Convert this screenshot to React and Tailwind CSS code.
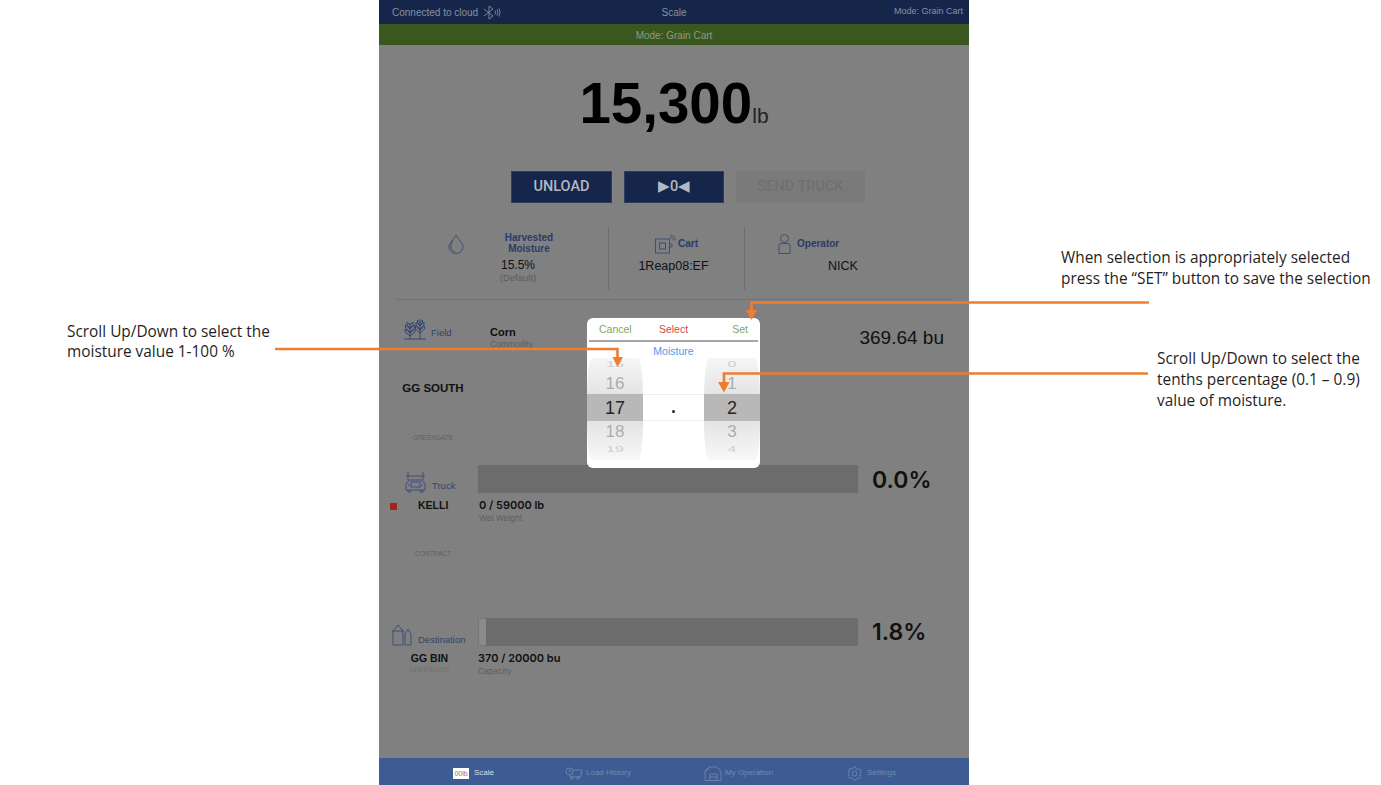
const sans = "font-['Liberation_Sans',Arial,sans-serif]";
const inter = "font-['Inter',sans-serif]";

function BluetoothIcon() {
  return (
    <svg width="18" height="15" viewBox="0 0 18 15" fill="none" stroke="#8f99ab" strokeWidth="0.8">
      <path d="M1 4 L10 11 L6 14 V1 L10 4 L1 11" />
      <path d="M12 5.5 Q13 7.5 12 9.5 M14 4.5 Q15.5 7.5 14 10.5 M16 3.5 Q18 7.5 16 11.5" />
    </svg>
  );
}

function DropIcon() {
  return (
    <svg width="16" height="20" viewBox="0 0 16 20" fill="none" stroke="#3f4f78" strokeWidth="1">
      <path d="M8 1 C6 5 1 9 1 13 A7 6.5 0 0 0 15 13 C15 9 10 5 8 1 Z" />
      <path d="M5 6.5 C3.5 9 2.8 11 3 13 C3.2 15.5 5 17.5 7 18" />
    </svg>
  );
}

function CartIcon() {
  return (
    <svg width="21" height="20" viewBox="0 0 21 20" fill="none" stroke="#3f4f78" strokeWidth="1">
      <rect x="0.5" y="5" width="14" height="14" />
      <rect x="4.5" y="9" width="6" height="6" />
      <path d="M14.5 10 H17 V13 H14.5" />
      <path d="M15 3 Q18 3.5 18.5 6.5 M15 1 Q20 1.5 20.5 6.5" />
    </svg>
  );
}

function OperatorIcon() {
  return (
    <svg width="13" height="20" viewBox="0 0 13 20" fill="none" stroke="#3f4f78" strokeWidth="1">
      <circle cx="6.5" cy="4.5" r="4" />
      <path d="M1 19.5 V11.5 Q1 9.5 3 9.5 H10 Q12 9.5 12 11.5 V19.5 Z" />
    </svg>
  );
}

function FieldIcon() {
  return (
    <svg width="23" height="22" viewBox="0 0 23 22" fill="none" stroke="#34466f" strokeWidth="1">
      <path d="M0 21 H22" />
      <path d="M6 21 V5 M16 21 V1" />
      <path d="M6 18 L1 14 V11 L6 15 L11 11 V14 L6 18 M6 14 L1.5 10 V7 L6 11 L10.5 7 V10 L6 14 M6 10 L3 7 V4 L6 7 L9 4 V7 L6 10" />
      <path d="M16 15 L11.5 11 V8 L16 12 L20.5 8 V11 L16 15 M16 11 L12 7 V4 L16 8 L20 4 V7 L16 11 M16 7 L13.5 4.5 V2 L16 4.5 L18.5 2 V4.5 L16 7" />
    </svg>
  );
}

function TruckIcon() {
  return (
    <svg width="22" height="22" viewBox="0 0 22 22" fill="none" stroke="#3f4f78" strokeWidth="1">
      <path d="M3 1 V9 M18 1 V9 M1 5 H20" />
      <path d="M4 9 H17 L20 13 V19 H1 V13 Z" />
      <rect x="6" y="11" width="9" height="5" />
      <path d="M3 19 V21 H6 V19 M15 19 V21 H18 V19" />
      <path d="M3 14 H5 M16 14 H18" />
    </svg>
  );
}

function SiloIcon() {
  return (
    <svg width="20" height="22" viewBox="0 0 20 22" fill="none" stroke="#3f4f78" strokeWidth="1">
      <path d="M1 21 V7 L6 1 L11 7 V21 Z M0 7 H12" />
      <path d="M13 21 V10 L16 5 L19 10 V21 Z" />
    </svg>
  );
}

function LoadIcon() {
  return (
    <svg width="18" height="13" viewBox="0 0 18 13" fill="none" stroke="#7688ab" strokeWidth="0.8">
      <circle cx="4.5" cy="4.5" r="3.5" />
      <path d="M4.5 2.5 V4.5 H6.5" />
      <path d="M8 3 H17 L15.5 10 H5 V8" />
      <circle cx="7" cy="11" r="1.4" />
      <circle cx="13" cy="11" r="1.4" />
    </svg>
  );
}

function BarnIcon() {
  return (
    <svg width="18" height="15" viewBox="0 0 18 15" fill="none" stroke="#7688ab" strokeWidth="0.8">
      <path d="M1 14.5 V6 Q2 2.5 6 1 H12 Q16 2.5 17 6 V14.5 Z" />
      <path d="M1 6 Q4 3 6 1" />
      <path d="M6 14.5 V8 H13 V14.5 M6 11 H13" />
    </svg>
  );
}

function GearIcon() {
  return (
    <svg width="15" height="15" viewBox="0 0 24 24" fill="none" stroke="#7688ab" strokeWidth="1.3">
      <circle cx="12" cy="12" r="4" />
      <path d="M10 1.5 H14 L14.6 5 L17.3 6.1 L20.2 4.1 L22.9 6.9 L20.9 9.7 L22 12.4 L22.5 14 L19.9 15 L20.9 17.3 L19.9 20 L17 19.7 L14.6 20.9 L14 22.5 H10 L9.4 19.9 L6.9 18.9 L4.1 19.9 L1.5 17 L3.1 14.6 L2 12 L1.5 10 L4.1 9.4 L3.1 6.9 L4.1 4.1 L6.9 5.1 L9.4 4.1 Z" />
    </svg>
  );
}

function Wheel({ top, prev, value, next, bottom }) {
  return (
    <div className="w-[56px] h-[102px] flex flex-col items-center rounded-[5px/40px] bg-gradient-to-b from-[#f6f6f6] via-[#dddddd] to-[#f8f8f8] overflow-hidden">
      <div className="h-[12px] w-full flex items-center justify-center text-[16px] leading-none scale-y-[0.6] text-[#cfcfcf]">{top}</div>
      <div className="h-[24px] pt-[3px] w-full flex items-center justify-center text-[17px] leading-none text-[#adadad]">{prev}</div>
      <div className="h-[27px] w-full flex items-center justify-center text-[18px] leading-none bg-[#b8b8b8] text-[#262626]">{value}</div>
      <div className="h-[21px] w-full flex items-center justify-center text-[17px] leading-none text-[#adadad]">{next}</div>
      <div className="h-[13px] w-full flex items-center justify-center text-[16px] leading-none scale-y-[0.6] text-[#cfcfcf]">{bottom}</div>
    </div>
  );
}

function MoistureModal() {
  return (
    <div className={`absolute left-[208px] top-[318px] w-[173px] h-[150px] bg-white rounded-[6px] ${sans}`}>
      <div className="h-[22px] px-[12px] grid grid-cols-3 items-center text-[10.5px] leading-[14px]">
        <span className="text-[#7fa862]">Cancel</span>
        <span className="text-center text-[#d5474a]">Select</span>
        <span className="text-right text-[#7fa862]">Set</span>
      </div>
      <div className="h-[2px] mx-[2px] bg-[#a6a6a6]" />
      <div className="h-[16px] pt-[4px] flex items-center justify-center text-[10.5px] text-[#4a9be8]">Moisture</div>
      <div className="flex justify-between">
        <Wheel top="15" prev="16" value="17" next="18" bottom="19" />
        <div className="flex-1 flex flex-col">
          <div className="h-[36px]" />
          <div className="h-[27px] flex items-end justify-center pb-[7px] border-y border-[#efefef]">
            <span className="w-[3px] h-[3px] rounded-full bg-[#262626]" />
          </div>
        </div>
        <Wheel top="0" prev="1" value="2" next="3" bottom="4" />
      </div>
    </div>
  );
}

function ArrowOverlay() {
  return (
    <svg className="absolute inset-0 pointer-events-none" width="1381" height="785" fill="none" stroke="#ed7d31" strokeWidth="2.6">
      <path d="M1149 302.5 H751.5 V312" />
      <path d="M746 310 H757 L751.5 320 Z" fill="#ed7d31" strokeWidth="0" />
      <path d="M275 349 H617.5 V359" />
      <path d="M612.5 357 H623 L617.5 367 Z" fill="#ed7d31" strokeWidth="0" />
      <path d="M1148 373.5 H724 V384" />
      <path d="M718 382 H729.5 L724 392.5 Z" fill="#ed7d31" strokeWidth="0" />
    </svg>
  );
}

function Progress({ children }) {
  return <div className="w-[380px] h-[28px] bg-[#6c6c6c]">{children}</div>;
}

function TabItem({ children, label, active, className }) {
  return (
    <div className={`flex items-center ${className}`}>
      {children}
      <span className={`text-[8px] ${active ? 'text-[#d9dfe9]' : 'text-[#7688ab]'}`}>{label}</span>
    </div>
  );
}

export default function App() {
  return (
    <div className="relative w-[1381px] h-[785px] overflow-hidden bg-white flex text-[#1f1f1f]">
      <aside className="w-[379px] pl-[67px] pt-[322px] font-['Open_Sans',sans-serif] text-[15.4px] leading-[20px]">
        <p>Scroll Up/Down to select the<br />moisture value 1-100 %</p>
      </aside>

      <main className={`relative w-[590px] h-[785px] flex flex-col bg-[#808080] ${sans}`}>
        <header className="h-[24px] shrink-0 grid grid-cols-3 items-center px-[6px] bg-[#16264a] text-[#8690a4]">
          <div className="flex items-center pl-[7px] text-[10px]">
            <span>Connected to cloud</span>
            <span className="ml-[5px]"><BluetoothIcon /></span>
          </div>
          <div className="text-center text-[10px]">Scale</div>
          <div className="text-right text-[9px]">Mode: Grain Cart</div>
        </header>
        <div className="h-[21px] pt-[1px] shrink-0 flex items-center justify-center bg-[#3a5720] text-[#8d9a80] text-[10px]">Mode: Grain Cart</div>

        <div className="h-[126px] shrink-0 flex items-baseline justify-center pt-[28px] text-black">
          <span className="text-[56.5px] leading-[62px] font-bold">15,300</span>
          <span className="text-[21px] leading-none text-[#222]">lb</span>
        </div>

        <div className="h-[32px] shrink-0 flex pl-[132px] gap-[12px]">
          <button className="w-[101px] bg-[#16264a] border border-[#2e3d5e] text-[#b3b9c4] text-[14.5px] font-medium font-['Roboto',sans-serif]">UNLOAD</button>
          <button className="w-[100px] bg-[#16264a] border border-[#2e3d5e] text-[#b3b9c4] text-[14.5px] font-medium font-['Roboto',sans-serif]">▶0◀</button>
          <button className="w-[129px] bg-[#7a7a7a] text-[#707070] text-[14.5px] font-medium font-['Roboto',sans-serif]">SEND TRUCK</button>
        </div>

        <div className="h-[63px] mt-[24px] shrink-0 flex">
          <div className="w-[230px] flex border-r border-[#6e6e6e] pl-[69px]">
            <div className="w-[20px] pt-[7px]"><DropIcon /></div>
            <div className="w-[100px] flex flex-col items-center">
              <div className="pl-[22px] text-center text-[#2b3b68] text-[10px] font-bold leading-[11px] pt-[5px]">Harvested<br />Moisture</div>
              <div className="text-[12px] leading-[14px] mt-[4px] text-[#111]">15.5%</div>
              <div className="text-[9.5px] leading-[12px] text-[#5c5c5c]">(Default)</div>
            </div>
          </div>
          <div className="w-[136px] border-r border-[#6e6e6e]">
            <div className="flex items-center pl-[46px] pt-[6px] gap-[2px] h-[27px]">
              <CartIcon />
              <span className="text-[#2b3b68] text-[10px] font-bold">Cart</span>
            </div>
            <div className="pr-[6px] text-center text-[12.5px] leading-[14px] mt-[5px] text-[#111]">1Reap08:EF</div>
          </div>
          <div className="flex-1">
            <div className="flex items-center pl-[33px] pt-[6px] gap-[6px] h-[27px]">
              <OperatorIcon />
              <span className="text-[#2b3b68] text-[10px] font-bold">Operator</span>
            </div>
            <div className="pl-[83px] text-[12.5px] leading-[14px] mt-[5px] text-[#111]">NICK</div>
          </div>
        </div>

        <div className="h-px mx-[17px] mt-[9px] shrink-0 bg-[#727272]" />

        <section className="h-[165px] shrink-0">
          <div className="flex items-start pt-[18px]">
            <div className="w-[111px] pl-[25px] flex items-end gap-[4px]">
              <FieldIcon />
              <span className="text-[#33436b] text-[9.5px] leading-[14px]">Field</span>
            </div>
            <div className="pt-[7px]">
              <div className="text-[11px] leading-[14px] font-bold text-[#111]">Corn</div>
              <div className="text-[8.5px] leading-[10px] text-[#5e5e5e]">Commodity</div>
            </div>
            <div className="ml-auto mr-[25px] pt-[9px] text-[19px] leading-[22px] text-[#111]">369.64 bu</div>
          </div>
          <div className="w-[108px] mt-[32px] text-center text-[11.5px] leading-[14px] font-bold text-[#111]">GG SOUTH</div>
          <div className="w-[108px] mt-[38px] text-center text-[6.5px] leading-[10px] text-[#606060]">GREENGATE</div>
        </section>

        <section className="h-[153px] shrink-0">
          <div className="flex">
            <div className="w-[99px] pl-[26px] pt-[5px] flex items-end gap-[5px] h-[28px]">
              <TruckIcon />
              <span className="text-[#33436b] text-[9.5px] leading-[14px]">Truck</span>
            </div>
            <Progress />
            <div className={`pl-[14px] pt-[1px] text-[23px] leading-[28px] font-semibold text-[#111] ${inter}`}>0.0%</div>
          </div>
          <div className="flex items-start mt-[5px]">
            <div className="w-[99px] flex items-center pl-[11px] h-[14px]">
              <span className="w-[7px] h-[7px] bg-[#a5231f]" />
              <span className="ml-[21px] text-[10.5px] font-bold text-[#111]">KELLI</span>
            </div>
            <div className="pl-[1px] -mt-[1px]">
              <div className={`text-[11px] leading-[14px] font-semibold text-[#111] ${inter}`}>0 / 59000 lb</div>
              <div className={`text-[8px] leading-[11px] mt-[1px] text-[#5e5e5e] ${inter}`}>Wet Weight</div>
            </div>
          </div>
          <div className="w-[108px] mt-[25px] text-center text-[6.5px] leading-[10px] text-[#606060]">CONTRACT</div>
        </section>

        <section className="h-[140px] shrink-0">
          <div className="flex">
            <div className="w-[99px] pl-[13px] pt-[6px] flex items-end gap-[6px] h-[28px]">
              <SiloIcon />
              <span className="text-[#33436b] text-[9.5px] leading-[12px]">Destination</span>
            </div>
            <Progress>
              <div className="w-[8px] h-full bg-[#8a8a8a] border-l border-y border-[#777777]" />
            </Progress>
            <div className={`pl-[14px] text-[23px] leading-[28px] font-semibold text-[#111] ${inter}`}>1.8%</div>
          </div>
          <div className="flex items-start mt-[5px]">
            <div className="w-[99px]">
              <div className="pl-[11px] w-[90px] text-center text-[10.5px] leading-[14px] font-bold text-[#111]">GG BIN</div>
              <div className="pl-[11px] w-[90px] text-center text-[6.5px] leading-[10px] text-[#707070]">GREENGATE</div>
            </div>
            <div>
              <div className={`text-[11px] leading-[14px] font-semibold text-[#111] ${inter}`}>370 / 20000 bu</div>
              <div className={`text-[8px] leading-[11px] mt-[1px] text-[#5e5e5e] ${inter}`}>Capacity</div>
            </div>
          </div>
        </section>

        <nav className="h-[27px] pt-[3px] shrink-0 flex items-center pl-[74px] bg-[#3d5c94]">
          <TabItem label="Scale" active className="w-[112px] gap-[5px]">
            <span className="w-[16px] h-[11px] bg-white text-[#7a8190] text-[7px] leading-[11px] text-center">00lb</span>
          </TabItem>
          <TabItem label="Load History" className="w-[139px] gap-[3px]"><LoadIcon /></TabItem>
          <TabItem label="My Operation" className="w-[143px] gap-[3px]"><BarnIcon /></TabItem>
          <TabItem label="Settings" className="gap-[5px]"><GearIcon /></TabItem>
        </nav>

        <MoistureModal />
      </main>

      <aside className="flex-1 font-['Open_Sans',sans-serif] text-[15.4px] leading-[20.7px] pt-[248px]">
        <p className="pl-[92px]">When selection is appropriately selected<br />press the “SET” button to save the selection</p>
        <p className="pl-[188px] mt-[60px]">Scroll Up/Down to select the<br />tenths percentage (0.1 – 0.9)<br />value of moisture.</p>
      </aside>

      <ArrowOverlay />
    </div>
  );
}
